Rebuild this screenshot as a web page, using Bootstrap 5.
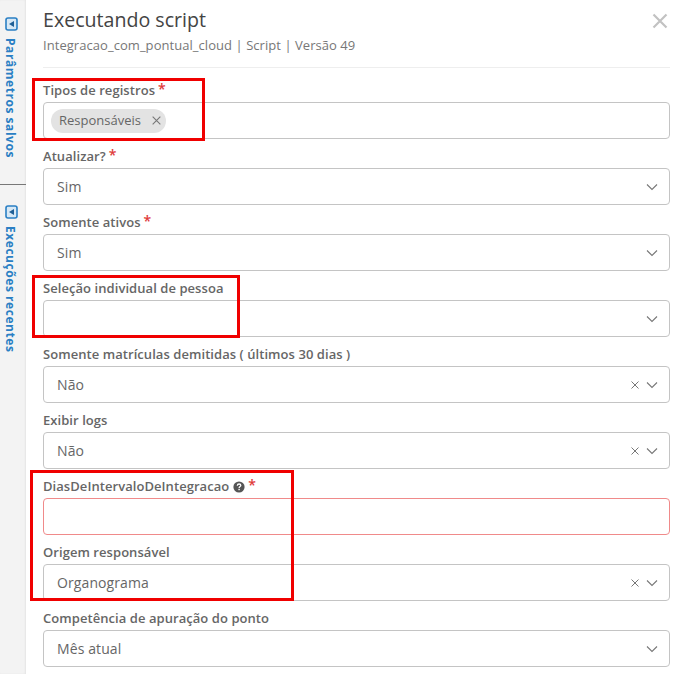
<!DOCTYPE html>
<html lang="pt-BR">
<head>
    <meta charset="UTF-8">
    <meta name="viewport" content="width=device-width, initial-scale=1.0">
    <title>Executando script</title>
    <link href="https://cdn.jsdelivr.net/npm/bootstrap@5.3.0/dist/css/bootstrap.min.css" rel="stylesheet">
    <style>
        html, body { height: 100%; overflow: hidden; }
        body { font-family: "Open Sans", sans-serif; color: #555; background: #fff; }
        .app-shell { height: 674px; position: relative; }
        .side-rail { width: 26px; flex: none; background: #f3f3f3; box-shadow: inset -1px 0 2px rgba(0,0,0,.06); }
        .rail-section { padding: 17px 3px 0 0; height: 184px; }
        .rail-section + .rail-section { border-top: 1px solid #777; padding-top: 20px; height: 300px; }
        .rail-text { writing-mode: vertical-rl; font-size: 12px; font-weight: 700; color: #2a7fc4; letter-spacing: .55px; line-height: 1; margin: 7px 3px 0 0; white-space: nowrap; }
        .rail-icon { width: 13px; height: 14px; display: block; }
        .form-pane { padding: 6px 12px 0 17px; min-width: 0; }
        .pane-title { font-size: 19.6px; font-weight: 400; color: #444; line-height: 28px; margin: 0; }
        .pane-sub { font-size: 13px; color: #777; line-height: 18px; margin-top: 2px; padding-bottom: 13px; border-bottom: 1px solid #eee; margin-bottom: 12px; letter-spacing: .05px; }
        .pane-close { position: absolute; top: 13px; right: 14px; width: 16px; height: 16px; }
        .field-row { height: 66px; }
        .field-label { font-size: 13px; font-weight: 600; color: #666; line-height: 18px; height: 22px; margin: 0; padding-top: 1px; letter-spacing: .06px; }
        .field-req { color: #e03a3a; font-size: 14px; line-height: 1; margin-left: 3px; position: relative; top: -1px; }
        .field-box { height: 37px; border: 1px solid #c4c4c4; border-radius: 4px; padding: 0 13px; font-size: 14px; color: #666; background: #fff; letter-spacing: .1px; }
        .field-box.is-bad { border-color: #f08a8a; }
        .tag-chip { background: #e3e3e3; border-radius: 12px; height: 24px; padding: 0 4px 0 8px; margin-left: -6px; font-size: 13px; color: #666; gap: 10px; letter-spacing: 0; }
        .help-icon { width: 12px; height: 12px; margin-left: 4px; position: relative; top: -1px; }
        .box-icons { gap: 6px; }
        .chev-end { margin-right: -2px; }
        .red-mark { position: absolute; border: 3px solid #f00000; pointer-events: none; }
        .mark-a { left: 32px; top: 78px; width: 173px; height: 63px; }
        .mark-b { left: 32px; top: 275px; width: 208px; height: 63px; }
        .mark-c { left: 30px; top: 470px; width: 264px; height: 131px; }
    </style>
</head>
<body>
    <svg width="0" height="0" class="position-absolute">
        <symbol id="chev" viewBox="0 0 12 8"><path d="M1 1.5 6 6.5 11 1.5" fill="none" stroke="#777" stroke-width="1.1"/></symbol>
        <symbol id="cross" viewBox="0 0 10 10"><path d="M1.5 1.5 8.5 8.5M8.5 1.5 1.5 8.5" fill="none" stroke="#777" stroke-width="1"/></symbol>
        <symbol id="rail" viewBox="0 0 13 14"><rect x="1" y="1" width="11" height="12" rx="2" fill="#d7e8f5" stroke="#2a7fc4" stroke-width="1.6"/><path d="M9 4 4 7 9 10Z" fill="#1f5f96"/></symbol>
    </svg>
    <div class="app-shell d-flex">
        <div class="side-rail">
            <div class="rail-section d-flex flex-column align-items-center">
                <svg class="rail-icon"><use href="#rail"/></svg>
                <span class="rail-text">Parâmetros salvos</span>
            </div>
            <div class="rail-section d-flex flex-column align-items-center">
                <svg class="rail-icon"><use href="#rail"/></svg>
                <span class="rail-text">Execuções recentes</span>
            </div>
        </div>
        <div class="form-pane flex-grow-1">
            <h1 class="pane-title">Executando script</h1>
            <div class="pane-sub">Integracao_com_pontual_cloud | Script | Versão 49</div>
            <svg class="pane-close" viewBox="0 0 16 16"><path d="M1.5 1.5 14.5 14.5M14.5 1.5 1.5 14.5" fill="none" stroke="#c2c2c2" stroke-width="2.2"/></svg>

            <div class="field-row">
                <label class="field-label d-block">Tipos de registros<span class="field-req">*</span></label>
                <div class="field-box d-flex align-items-center">
                    <span class="tag-chip d-inline-flex align-items-center">Responsáveis <svg width="11" height="11"><use href="#cross"/></svg></span>
                </div>
            </div>
            <div class="field-row">
                <label class="field-label d-block">Atualizar?<span class="field-req">*</span></label>
                <div class="field-box d-flex align-items-center justify-content-between">Sim <svg class="chev-end" width="12" height="8"><use href="#chev"/></svg></div>
            </div>
            <div class="field-row">
                <label class="field-label d-block">Somente ativos<span class="field-req">*</span></label>
                <div class="field-box d-flex align-items-center justify-content-between">Sim <svg class="chev-end" width="12" height="8"><use href="#chev"/></svg></div>
            </div>
            <div class="field-row">
                <label class="field-label d-block">Seleção individual de pessoa</label>
                <div class="field-box d-flex align-items-center justify-content-end"><svg class="chev-end" width="12" height="8"><use href="#chev"/></svg></div>
            </div>
            <div class="field-row">
                <label class="field-label d-block">Somente matrículas demitidas ( últimos 30 dias )</label>
                <div class="field-box d-flex align-items-center justify-content-between">Não <span class="box-icons d-flex align-items-center"><svg width="10" height="10"><use href="#cross"/></svg><svg class="chev-end" width="12" height="8"><use href="#chev"/></svg></span></div>
            </div>
            <div class="field-row">
                <label class="field-label d-block">Exibir logs</label>
                <div class="field-box d-flex align-items-center justify-content-between">Não <span class="box-icons d-flex align-items-center"><svg width="10" height="10"><use href="#cross"/></svg><svg class="chev-end" width="12" height="8"><use href="#chev"/></svg></span></div>
            </div>
            <div class="field-row">
                <label class="field-label d-block">DiasDeIntervaloDeIntegracao<svg class="help-icon" viewBox="0 0 12 12"><circle cx="6" cy="6" r="5.6" fill="#555"/><path d="M4.3 4.7C4.4 3.6 5.1 3 6.1 3 7.1 3 7.8 3.6 7.8 4.4 7.8 5.5 6.1 5.6 6.1 6.9" fill="none" stroke="#fff" stroke-width="1.3"/><rect x="5.4" y="7.8" width="1.4" height="1.4" fill="#fff"/></svg><span class="field-req">*</span></label>
                <div class="field-box is-bad"></div>
            </div>
            <div class="field-row">
                <label class="field-label d-block">Origem responsável</label>
                <div class="field-box d-flex align-items-center justify-content-between">Organograma <span class="box-icons d-flex align-items-center"><svg width="10" height="10"><use href="#cross"/></svg><svg class="chev-end" width="12" height="8"><use href="#chev"/></svg></span></div>
            </div>
            <div class="field-row">
                <label class="field-label d-block">Competência de apuração do ponto</label>
                <div class="field-box d-flex align-items-center justify-content-between">Mês atual <svg class="chev-end" width="12" height="8"><use href="#chev"/></svg></div>
            </div>
        </div>
        <div class="red-mark mark-a"></div>
        <div class="red-mark mark-b"></div>
        <div class="red-mark mark-c"></div>
    </div>
    <script src="https://cdn.jsdelivr.net/npm/bootstrap@5.3.0/dist/js/bootstrap.bundle.min.js"></script>
</body>
</html>
